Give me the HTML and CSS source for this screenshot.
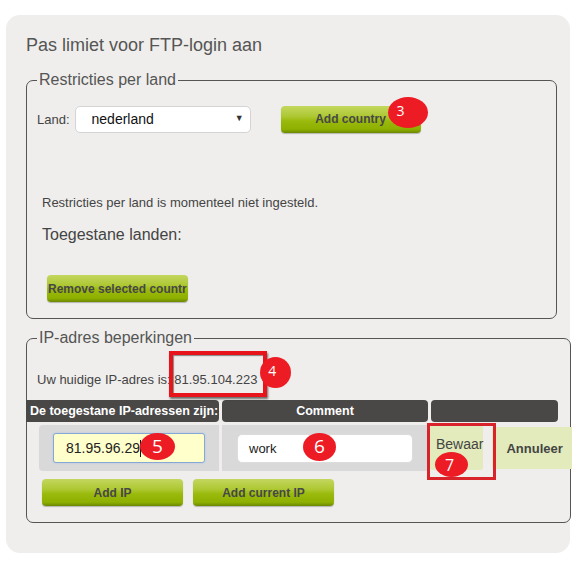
FILE: index.html
```html
<!DOCTYPE html>
<html lang="nl">
<head>
    <meta charset="UTF-8">
    <meta name="viewport" content="width=device-width, initial-scale=1.0">
    <title>Pas limiet voor FTP-login aan</title>
    <link rel="stylesheet" href="styles.css">
</head>
<body>
    <div class="panel">
        <h2 class="title">Pas limiet voor FTP-login aan</h2>

        <fieldset class="box box-country">
            <legend>Restricties per land</legend>
            <div class="land-row">
                <span class="land-label">Land:</span>
                <div class="select">nederland</div>
                <span class="btn-wrap">
                    <button class="btn btn-add-country">Add country</button>
                    <span class="badge badge-3">3</span>
                </span>
            </div>
            <p class="note">Restricties per land is momenteel niet ingesteld.</p>
            <h3 class="sub">Toegestane landen:</h3>
            <button class="btn btn-remove">Remove selected countr</button>
        </fieldset>

        <fieldset class="box box-ip">
            <legend>IP-adres beperkingen</legend>
            <p class="ip-line">
                Uw huidige IP-adres is: <span class="current-ip">81.95.104.223<span class="mark mark-ip"></span><span class="badge badge-4">4</span></span>
            </p>

            <div class="ip-grid">
                <div class="ip-head ip-head-first">De toegestane IP-adressen zijn:</div>
                <div class="ip-head">Comment</div>
                <div class="ip-head"></div>

                <div class="ip-cell ip-cell-first">
                    <div class="field field-ip">81.95.96.29<span class="caret"></span>
                        <span class="badge badge-5">5</span>
                    </div>
                </div>
                <div class="ip-cell ip-cell-comment">
                    <div class="field field-comment">work
                        <span class="badge badge-6">6</span>
                    </div>
                </div>
                <div class="ip-cell-actions">
                    <button class="row-btn btn-save">Bewaar</button>
                    <button class="row-btn btn-cancel">Annuleer</button>
                    <span class="mark mark-save"></span>
                    <span class="badge badge-7">7</span>
                </div>
            </div>

            <div class="ip-actions">
                <button class="btn">Add IP</button>
                <button class="btn">Add current IP</button>
            </div>
        </fieldset>
    </div>
</body>
</html>
```

FILE: styles.css
```css
body {
    margin: 0;
    background-color: #fff;
    font-family: "Liberation Sans", Arial, sans-serif;
    color: #444;
}
.panel {
    margin: 15px 0 0 6px;
    width: 531px;
    padding: 20px 13px 30px 20px;
    background-color: #efeeec;
    border-radius: 14px;
}
.title {
    margin: 0 0 16px 0;
    font-size: 18px;
    font-weight: normal;
    line-height: 20px;
    color: #555;
}
.box {
    box-sizing: border-box;
    margin: 0;
    padding: 16px 10px 16px 10px;
    border: 1px solid #555;
    border-radius: 7px;
    min-width: 0;
}
.box legend {
    padding: 0 2px;
    font-size: 16px;
    color: #555;
}
.box-country {
    width: 531px;
}
.box-ip {
    width: 545px;
    margin-top: 10px;
}

/* buttons */
.btn {
    width: 141px;
    height: 27px;
    padding: 0;
    border: 0;
    border-radius: 4px;
    font: bold 12px "Liberation Sans", Arial, sans-serif;
    color: #474747;
    background: linear-gradient(to bottom, #c3d75f 0%, #aec833 38%, #9aba0d 55%, #8eb000 86%, #6b8800 100%);
    box-shadow: 0 1px 1px rgba(0,0,0,0.25);
    cursor: pointer;
}

/* land row */
.land-row {
    display: flex;
    align-items: center;
    height: 28px;
}
.land-label {
    font-size: 13px;
    margin-right: 5px;
}
.select {
    position: relative;
    box-sizing: border-box;
    width: 176px;
    height: 27px;
    padding-left: 16px;
    display: flex;
    align-items: center;
    background-color: #fff;
    border: 1px solid #d4d4d4;
    border-radius: 5px;
    font-size: 14px;
    color: #111;
}
.select::after {
    content: "\25BC";
    position: absolute;
    right: 6px;
    top: 6px;
    font-size: 9px;
    color: #333;
}
.btn-wrap {
    position: relative;
    margin-left: 30px;
}
.btn-add-country {
    width: 140px;
}
.note {
    margin: 62px 0 0 5px;
    font-size: 13px;
}
.sub {
    margin: 16px 0 0 5px;
    font-size: 16px;
    font-weight: normal;
}
.btn-remove {
    margin: 31px 0 0 10px;
    white-space: nowrap;
    text-align: left;
    padding-left: 1px;
}

/* annotations */
.badge {
    position: absolute;
    display: flex;
    align-items: center;
    justify-content: center;
    background-color: #ed1c24;
    color: #fff;
    border-radius: 50%;
    font-family: "Open Sans", "Liberation Sans", sans-serif;
    font-size: 14px;
    line-height: 1;
}
.badge-3 {
    left: 107px;
    top: -9px;
    width: 40px;
    height: 31px;
    justify-content: flex-start;
    align-items: flex-start;
    padding: 7px 0 0 9px;
    box-sizing: border-box;
}
.badge-4 {
    left: 86px;
    top: -15px;
    width: 31px;
    height: 31px;
    justify-content: flex-start;
    align-items: flex-start;
    padding: 7px 0 0 8px;
    box-sizing: border-box;
}
.badge-5 {
    left: 86px;
    top: -1px;
    width: 35px;
    height: 27px;
    font-size: 19px;
}
.badge-6 {
    left: 65px;
    top: -2px;
    width: 33px;
    height: 28px;
    font-size: 19px;
}
.badge-7 {
    left: 4px;
    top: 27px;
    width: 33px;
    height: 25px;
    font-size: 16px;
    justify-content: flex-start;
    padding-left: 10px;
    box-sizing: border-box;
}
.mark {
    position: absolute;
    box-sizing: border-box;
}
.mark-ip {
    left: -5px;
    top: -21px;
    width: 98px;
    height: 46px;
    border: 4px solid #e8141b;
    box-shadow: 1px 2px 2px rgba(0,0,0,0.55), inset 1px 1px 1px rgba(0,0,0,0.45);
}
.mark-save {
    left: -4px;
    top: -2px;
    width: 69px;
    height: 57px;
    border: 3px solid #d8232a;
}

/* ip section */
.ip-line {
    margin: 9px 0 0 0;
    font-size: 13px;
}
.current-ip {
    position: relative;
}
.ip-grid {
    display: grid;
    grid-template-columns: 193px 206px 127px;
    gap: 3px;
    margin: 13px 0 0 -11px;
}
.ip-head {
    height: 22px;
    line-height: 22px;
    background-color: #4a4747;
    color: #fff;
    font-weight: bold;
    font-size: 12.5px;
    text-align: center;
    border-radius: 4px;
}
.ip-head-first {
    text-align: left;
    padding-left: 4px;
    border-radius: 0 4px 4px 0;
}
.ip-cell {
    height: 46px;
    display: flex;
    align-items: center;
    background-color: #d9d9d9;
}
.ip-cell-first {
    margin-left: 13px;
    padding-left: 14px;
    border-radius: 4px 0 0 4px;
}
.ip-cell-comment {
    padding-left: 15px;
}
.field {
    position: relative;
    box-sizing: border-box;
    display: flex;
    align-items: center;
    font-size: 14px;
    color: #222;
}
.field-ip {
    width: 152px;
    height: 30px;
    padding-left: 12px;
    background-color: #ffffcc;
    border: 1px solid #86a6d6;
    border-radius: 3px;
    box-shadow: 0 0 2px #a9c2e8;
}
.caret {
    display: inline-block;
    width: 1px;
    height: 17px;
    background-color: #111;
}
.field-comment {
    width: 176px;
    height: 29px;
    padding-left: 11px;
    background-color: #fff;
    border: 1px solid #dcdcdc;
    border-radius: 5px;
    font-size: 13px;
}
.ip-cell-actions {
    position: relative;
    display: flex;
    align-items: flex-start;
    gap: 9px;
}
.row-btn {
    height: 45px;
    padding: 0;
    border: 0;
    border-radius: 3px;
    background-color: #e3eabb;
    font: 13px "Liberation Sans", Arial, sans-serif;
    color: #444;
    cursor: pointer;
}
.btn-save {
    width: 57px;
    margin-left: -1px;
    text-align: left;
    padding: 0 0 7px 6px;
    line-height: 1;
    font-size: 14px;
}
.btn-cancel {
    flex: none;
    width: 85px;
    text-align: left;
    padding-left: 14px;
    font-weight: bold;
    margin-top: 2px;
    height: 42px;
}
.ip-actions {
    display: flex;
    gap: 10px;
    margin: 8px 0 0 5px;
}
```
